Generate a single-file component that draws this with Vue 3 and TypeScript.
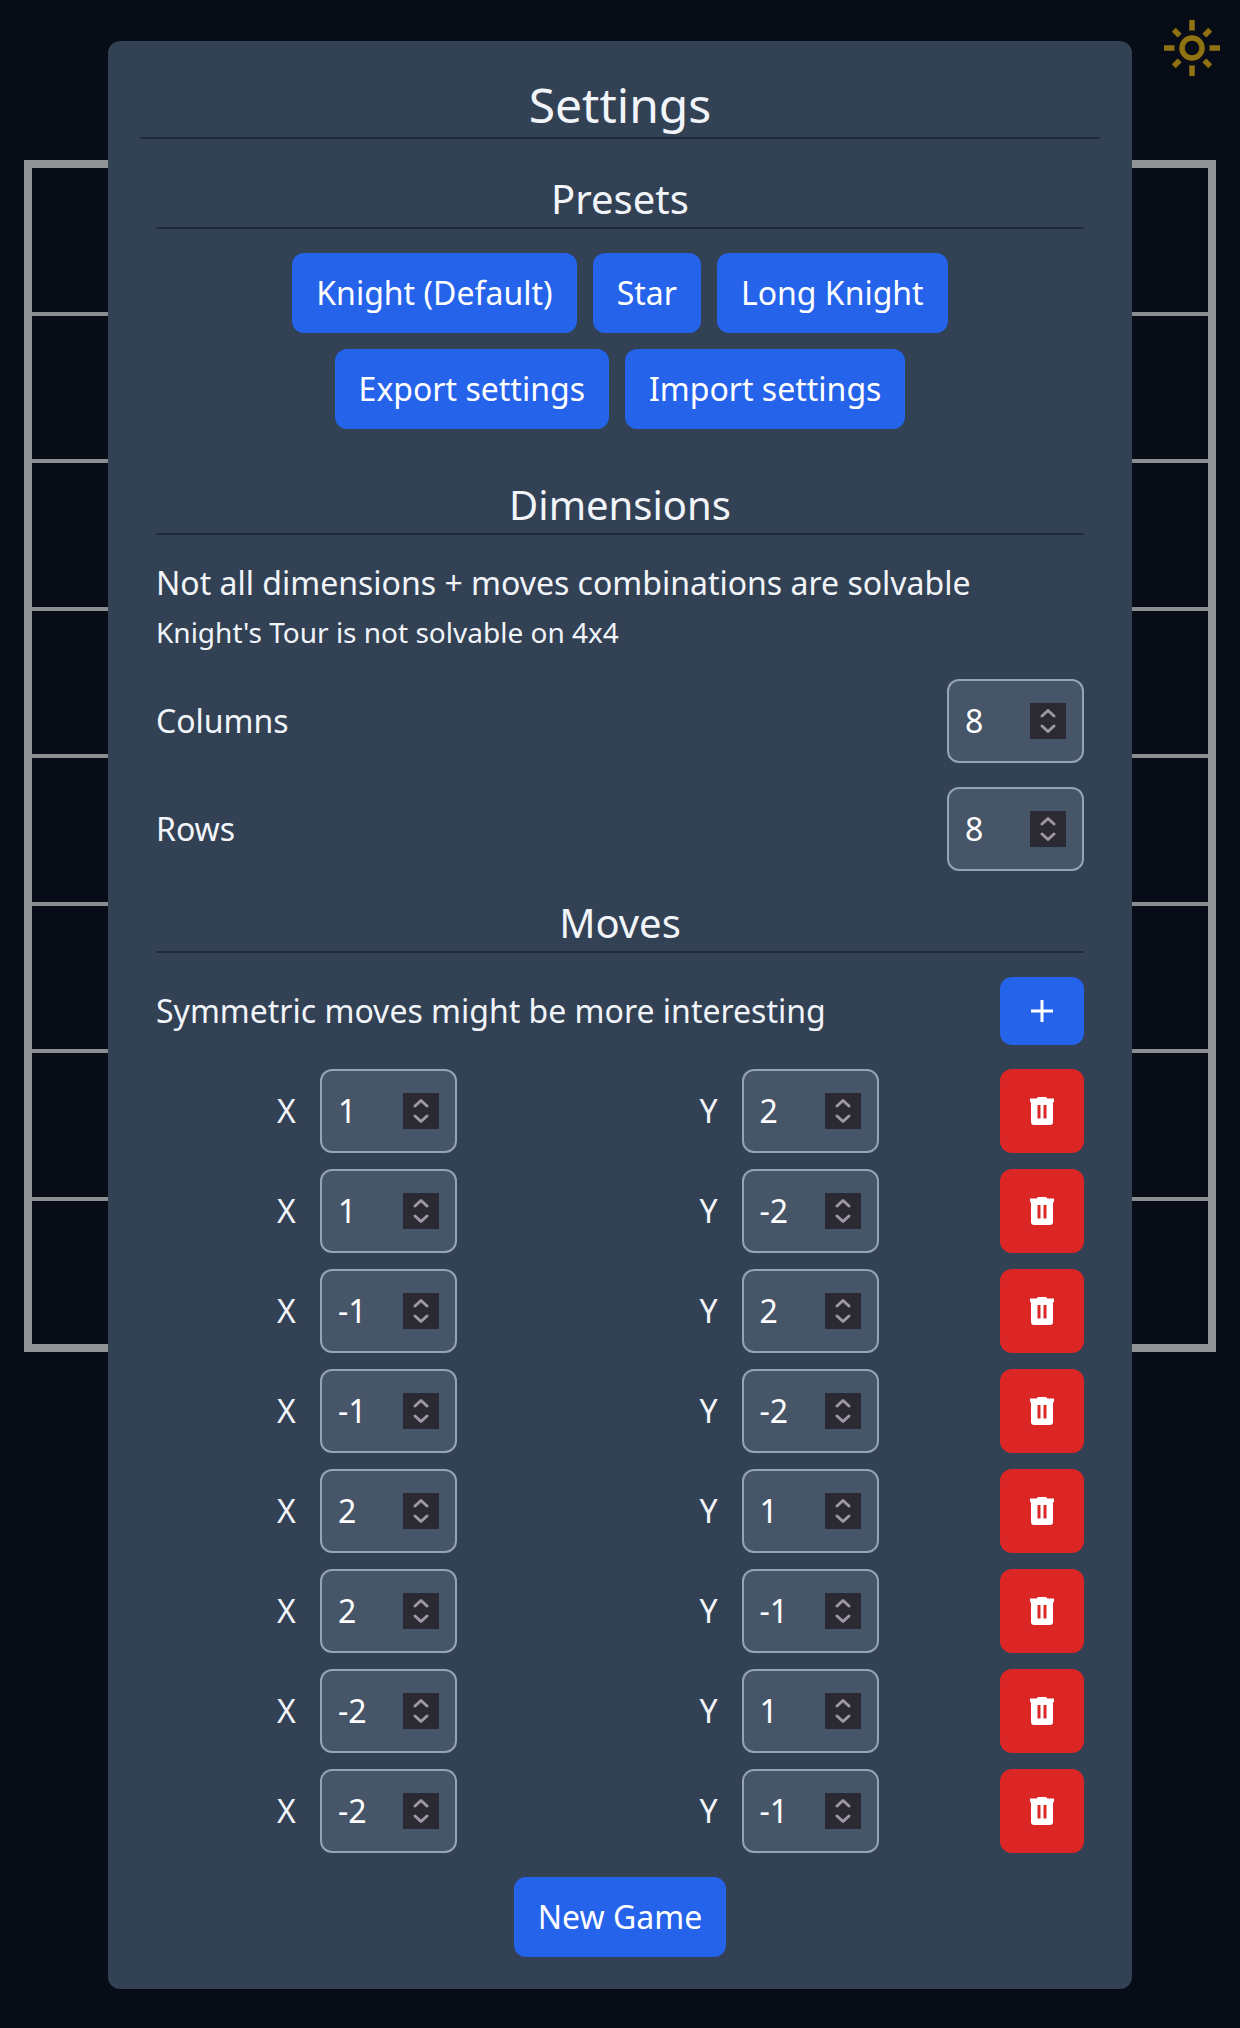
<script setup lang="ts">
import { ref } from 'vue'

interface Move {
  id: number
  x: number
  y: number
}

interface Preset {
  name: string
  moves: [number, number][]
}

const knight: [number, number][] = [
  [1, 2], [1, -2], [-1, 2], [-1, -2],
  [2, 1], [2, -1], [-2, 1], [-2, -1],
]

const presets: Preset[] = [
  { name: 'Knight (Default)', moves: knight },
  { name: 'Star', moves: [[0, 3], [0, -3], [3, 0], [-3, 0], [2, 2], [2, -2], [-2, 2], [-2, -2]] },
  { name: 'Long Knight', moves: knight.map(([x, y]): [number, number] => [Math.abs(x) === 2 ? x * 3 / 2 : x, Math.abs(y) === 2 ? y * 3 / 2 : y]) },
]

let nextId = 0
const toMoves = (list: [number, number][]): Move[] => list.map(([x, y]) => ({ id: nextId++, x, y }))

const size = ref({ columns: 8, rows: 8 })
const dimensions: { key: 'columns' | 'rows'; label: string }[] = [
  { key: 'columns', label: 'Columns' },
  { key: 'rows', label: 'Rows' },
]
const axes: { key: 'x' | 'y'; label: string }[] = [
  { key: 'x', label: 'X' },
  { key: 'y', label: 'Y' },
]
const moves = ref<Move[]>(toMoves(knight))

function applyPreset(preset: Preset) {
  moves.value = toMoves(preset.moves)
}
function addMove() {
  moves.value.push({ id: nextId++, x: 0, y: 0 })
}
function removeMove(id: number) {
  moves.value = moves.value.filter((m) => m.id !== id)
}
</script>

<template>
  <div class="page">
    <div class="game">
      <header class="topbar">
        <button class="theme" type="button" aria-label="Toggle theme">
          <svg viewBox="0 0 64 64" width="64" height="64" fill="none" stroke="currentColor" stroke-width="5.500">
            <circle cx="32" cy="32" r="10" />
            <path d="M32 4v10.500M32 49.500V60M4 32h10.500M49.500 32H60M13.800 13.800l5.800 5.800M44.400 44.400l5.800 5.800M50.200 13.800l-5.800 5.800M19.600 44.400l-5.800 5.800" />
          </svg>
        </button>
      </header>
      <div class="board">
        <div v-for="n in 64" :key="n" class="cell"></div>
      </div>
    </div>

    <div class="overlay">
      <form class="modal" role="dialog" aria-labelledby="settings-title" @submit.prevent>
        <h1 id="settings-title">Settings</h1>
        <div class="sections">
          <section class="presets">
            <h2>Presets</h2>
            <div class="buttons">
              <button v-for="p in presets" :key="p.name" class="btn" type="button" @click="applyPreset(p)">{{ p.name }}</button>
              <button class="btn" type="button">Export settings</button>
              <button class="btn" type="button">Import settings</button>
            </div>
          </section>

          <section>
            <h2>Dimensions</h2>
            <div>
              <p>Not all dimensions + moves combinations are solvable</p>
              <p><small>Knight's Tour is not solvable on 4x4</small></p>
            </div>
            <div v-for="d in dimensions" :key="d.key" class="row">
              <label :for="d.key">{{ d.label }}</label>
              <div class="field">
                <input :id="d.key" v-model.number="size[d.key]" type="number" />
                <div class="spinner">
                  <button type="button" aria-label="Increase" @click="size[d.key]++">
                    <svg viewBox="0 0 36 18" width="36" height="18"><path d="M12 13l6-5.500 6 5.500" /></svg>
                  </button>
                  <button type="button" aria-label="Decrease" @click="size[d.key]--">
                    <svg viewBox="0 0 36 18" width="36" height="18"><path d="M12 5l6 5.500 6-5.500" /></svg>
                  </button>
                </div>
              </div>
            </div>
          </section>

          <section>
            <h2>Moves</h2>
            <div class="row">
              <p>Symmetric moves might be more interesting</p>
              <button class="btn icon add" type="button" aria-label="Add move" @click="addMove">
                <svg viewBox="0 0 32 32" width="32" height="32"><path d="M16 5v22M5 16h22" fill="none" stroke="currentColor" stroke-width="3" /></svg>
              </button>
            </div>
            <div class="moves">
              <div v-for="m in moves" :key="m.id" class="row">
                <div v-for="a in axes" :key="a.key" class="axis">
                  <label :for="a.key + m.id">{{ a.label }}</label>
                  <div class="field">
                    <input :id="a.key + m.id" v-model.number="m[a.key]" type="number" />
                    <div class="spinner">
                      <button type="button" aria-label="Increase" @click="m[a.key]++">
                        <svg viewBox="0 0 36 18" width="36" height="18"><path d="M12 13l6-5.500 6 5.500" /></svg>
                      </button>
                      <button type="button" aria-label="Decrease" @click="m[a.key]--">
                        <svg viewBox="0 0 36 18" width="36" height="18"><path d="M12 5l6 5.500 6-5.500" /></svg>
                      </button>
                    </div>
                  </div>
                </div>
                <button class="btn icon remove" type="button" aria-label="Remove move" @click="removeMove(m.id)">
                  <svg viewBox="0 0 32 32" width="32" height="32" fill="currentColor" fill-rule="evenodd">
                    <path d="M4 3.600h6.500L12 2h8l1.500 1.600H28v3.600h-1V27a3 3 0 0 1-3 3H8a3 3 0 0 1-3-3V7.200H4zM11.500 10v13.400h3V10zM17.500 10v13.400h3V10z" />
                  </svg>
                </button>
              </div>
            </div>
          </section>
        </div>
        <button class="btn start" type="submit">New Game</button>
      </form>
    </div>
  </div>
</template>

<style>
body {
  margin: 0;
  background: #080c16;
}
</style>

<style scoped>
* {
  box-sizing: border-box;
}

.page {
  display: grid;
  min-height: 100vh;
  background: #080c16;
  color: #f1f5f9;
  font-family: "Noto Sans", sans-serif;
  font-size: 32px;
  line-height: 48px;
}

.game,
.overlay {
  grid-area: 1 / 1;
  min-width: 0;
}

.topbar {
  display: flex;
  justify-content: flex-end;
  align-items: flex-start;
  height: 160px;
  padding: 16px;
}

button {
  border: 0;
  padding: 0;
  background: none;
  color: inherit;
  font: inherit;
  cursor: pointer;
}

svg {
  display: block;
}

.theme {
  color: #8f7310;
}

.board {
  display: grid;
  grid-template: repeat(8, 1fr) / repeat(8, 1fr);
  gap: 4px;
  aspect-ratio: 1;
  margin: 0 24px;
  border: 8px solid #929394;
  background: #8b8d90;
}

.cell {
  background: #080c16;
}

.overlay {
  z-index: 1;
  display: flex;
  justify-content: center;
  align-items: flex-start;
  padding: 41px 24px 39px;
}

.modal {
  display: flex;
  flex-direction: column;
  width: 100%;
  max-width: 1024px;
  padding: 32px;
  border-radius: 12px;
  background: #334155;
}

h1,
h2 {
  margin: 0;
  border-bottom: 2px solid #1e293b;
  font-weight: 400;
  text-align: center;
}

h1 {
  font-size: 48px;
  line-height: 64px;
}

h2 {
  font-size: 40px;
  line-height: 56px;
}

p {
  margin: 0;
}

small {
  font-size: 28px;
  line-height: 40px;
}

.sections {
  display: flex;
  flex-direction: column;
  gap: 24px;
  padding: 32px 16px 24px;
}

section {
  display: flex;
  flex-direction: column;
  gap: 24px;
}

.presets {
  padding-bottom: 24px;
}

.buttons {
  display: flex;
  flex-wrap: wrap;
  justify-content: center;
  gap: 16px;
  padding: 0 96px;
}

.btn {
  padding: 16px 24px;
  border-radius: 12px;
  background: #2563eb;
  color: #fff;
}

.start {
  align-self: center;
}

.row {
  display: flex;
  justify-content: space-between;
  align-items: center;
}

.moves {
  display: flex;
  flex-direction: column;
  gap: 16px;
}

.axis {
  display: flex;
  flex: 1;
  justify-content: center;
  align-items: center;
  gap: 24px;
}

.field {
  display: flex;
  align-items: center;
  width: 137px;
  height: 84px;
  padding: 0 16px;
  border: 2px solid #94a3b8;
  border-radius: 12px;
  background: #475569;
}

input {
  flex: 1;
  min-width: 0;
  height: 48px;
  padding: 0;
  border: 0;
  outline: 0;
  background: none;
  color: #fff;
  font: inherit;
  appearance: textfield;
}

input::-webkit-inner-spin-button,
input::-webkit-outer-spin-button {
  margin: 0;
  appearance: none;
}

.spinner {
  display: flex;
  flex-direction: column;
  width: 36px;
  background: #2b2a33;
}

.spinner path {
  fill: none;
  stroke: #a097a6;
  stroke-width: 3;
  stroke-linecap: round;
  stroke-linejoin: round;
}

.icon {
  display: flex;
  justify-content: center;
  align-items: center;
  width: 84px;
}

.add {
  height: 68px;
}

.remove {
  height: 84px;
  background: #dc2626;
}
</style>
